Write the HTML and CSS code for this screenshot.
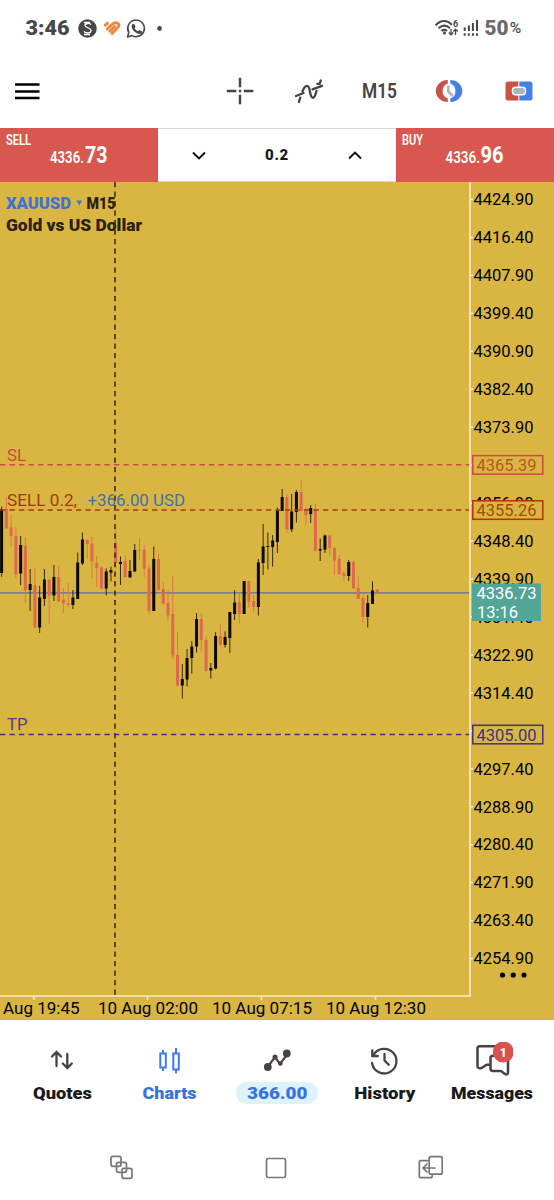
FILE: index.html
```html
<!DOCTYPE html>
<html lang="en">
<head>
    <meta charset="UTF-8">
    <meta name="viewport" content="width=device-width, initial-scale=1.0">
    <title>XAUUSD Chart</title>
    <link rel="stylesheet" href="styles.css">
</head>
<body>
    <div class="status-bar">
        <svg class="status-icons" width="170" height="56" viewBox="0 0 170 56">
            <text class="clock" x="25.500" y="35" textLength="44" lengthAdjust="spacingAndGlyphs">3:46</text>
            <circle cx="87.5" cy="28.500" r="9.300" fill="#484848"/>
            <path d="M91 24.500c-1.500-1.500-6-1.500-6 1s6 2 6 5-5 3-7 1M84 22.500h6M84 34.500h6" fill="none" stroke="#fff" stroke-width="1.300"/>
            <g fill="none" stroke="#ea8840" stroke-width="2.900" stroke-linecap="round" stroke-linejoin="round">
                <path d="M105.200 25.200l2.300-1.900"/>
                <path d="M107.200 29l5.600-5.300q3.500-2.200 5.700.3 1 2-.8 3.500l-5.700 6"/>
                <path d="M109.800 31.300l4.700-4.700"/>
            </g>
            <path d="M127.500 37l1.300-4.600a8.300 8.300 0 1 1 3.200 3.200z" fill="none" stroke="#484848" stroke-width="1.600" stroke-linejoin="round"/>
            <path d="M132.300 24.300l1.800-.5 1.500 3-1 1.400q1.200 2.200 3.400 3l1.400-1.300 2.800 1.500c0 2.500-2.700 3-4.700 2.100-3.500-1.500-6-4.500-5.900-7.500z" fill="#484848"/>
            <circle cx="159.500" cy="28.500" r="2.400" fill="#484848"/>
        </svg>
        <svg class="status-icons" width="130" height="56" viewBox="424 0 130 56">
            <g fill="none" stroke="#484848" stroke-width="2">
                <path d="M435.500 25.200q8.500-8 16.500-.5M438.500 28.200q6-5.200 11.500 0M441.500 31q3-2.200 5.500 0"/>
                <path d="M451 29v5.500M448.800 32.500l2.200 2.300 2.200-2.300M455.500 35v-5.500M453.300 31.500l2.200-2.300 2.200 2.300" stroke-width="1.300"/>
            </g>
            <circle cx="444.500" cy="33" r="1.500" fill="#484848"/>
            <text x="453" y="26.500" class="wifi-gen">6</text>
            <path d="M464.700 27.500v3.500M468.900 25.500v5.500M472.900 23v8M477 20v11" stroke="#484848" stroke-width="2"/>
            <path d="M463.700 34.500h15" stroke="#484848" stroke-width="2.400" stroke-dasharray="2 2.100"/>
            <text class="battery" x="484.500" y="34.800" textLength="24" lengthAdjust="spacingAndGlyphs">50</text>
            <text class="percent" x="509.800" y="32.800" textLength="11.500" lengthAdjust="spacingAndGlyphs">%</text>
        </svg>
    </div>

    <div class="toolbar">
        <svg width="26" height="18" viewBox="0 0 26 18"><path d="M1 2.500h24.500M1 9.500h24.500M1 16h24.500" stroke="#000" stroke-width="2.500"/></svg>
        <div class="tools">
            <svg class="crosshair" width="28" height="28" viewBox="0 0 28 28"><path d="M14 .8v9.500M14 17.800v9.500M.8 14h9.500M17.800 14h9.500M12.800 14h2.400" stroke="#484342" stroke-width="2.400"/></svg>
            <svg class="indicators" width="30" height="28" viewBox="294 76 30 28">
                <g fill="none" stroke="#484342" stroke-width="2.300" stroke-linecap="round">
                    <path d="M296 95l7.500-3M312.500 88.300l9.500-3.500M317.300 82.800h2.300l1.200-3.300M299 101l1.300-4.500"/>
                    <path d="M302.500 90.500c1.500-4 3-6 5-5.500s2 4 2.600 6.500 1 5.300 2.900 5.300 2.500-3.300 3.500-6.800"/>
                </g>
            </svg>
            <svg width="38" height="28" viewBox="0 0 38 28"><text class="period" x="1" y="20.700" textLength="35" lengthAdjust="spacingAndGlyphs">M15</text></svg>
            <svg width="28" height="24" viewBox="0 0 28 24">
                <path d="M12.800 1A12 11 0 0 0 12.800 23v-3.500a8 8 0 0 1 0-15z" fill="#c95247"/>
                <path d="M15.300 1A12 11 0 0 1 15.300 23v-3.500a8 8 0 0 0 0-15z" fill="#4380e8"/>
                <path d="M13.300 6.500v6l4.500 4.500" fill="none" stroke="#a9b7bd" stroke-width="2.600"/>
            </svg>
            <svg class="one-click" width="28" height="20" viewBox="0 0 28 20">
                <path d="M13.300 .5H3Q.5 .5 .5 3v14q0 2.500 2.500 2.500h10.300z" fill="#c95247"/>
                <path d="M14.300 .5H25q2.500 0 2.500 2.500v14q0 2.500-2.500 2.500H14.300z" fill="#4380e8"/>
                <rect x="7.500" y="6.300" width="13" height="7.500" rx="3" fill="#a9b7bd" stroke="#fff" stroke-width="1.400"/>
            </svg>
        </div>
    </div>

    <div class="trade-panel">
        <svg class="side" width="158" height="54" viewBox="0 128 158 54">
            <text class="side-label" x="6" y="145" textLength="25" lengthAdjust="spacingAndGlyphs">SELL</text>
            <text class="side-price" x="50" y="162.500" textLength="34" lengthAdjust="spacingAndGlyphs">4336.</text>
            <text class="side-pips" x="85" y="162.500" textLength="22.500" lengthAdjust="spacingAndGlyphs">73</text>
        </svg>
        <div class="volume">
            <svg width="14" height="9" viewBox="0 0 14 9"><path d="M1 1.500l6 6 6-6" fill="none" stroke="#111" stroke-width="1.900"/></svg>
            <span>0.2</span>
            <svg width="14" height="9" viewBox="0 0 14 9"><path d="M1 7.500l6-6 6 6" fill="none" stroke="#111" stroke-width="1.900"/></svg>
        </div>
        <svg class="side" width="158" height="54" viewBox="396 128 158 54">
            <text class="side-label" x="402" y="145" textLength="21" lengthAdjust="spacingAndGlyphs">BUY</text>
            <text class="side-price" x="445.500" y="162.500" textLength="34.500" lengthAdjust="spacingAndGlyphs">4336.</text>
            <text class="side-pips" x="480.500" y="162.500" textLength="23" lengthAdjust="spacingAndGlyphs">96</text>
        </svg>
    </div>

    <svg class="chart" width="554" height="838" viewBox="0 182 554 838">
        <path d="M0 592.800H470" stroke="#80808c" stroke-width="1.800"/>
        <g id="candles"></g>
        <path class="dash" d="M115 182V995" stroke="#3b2500"/>
        <path class="dash" d="M0 464.700H470" stroke="#d04a4a"/>
        <path class="dash" d="M0 510H470" stroke="#a83a10"/>
        <path class="dash" d="M0 734.500H470" stroke="#40308c"/>
        <path d="M470 182V996M0 996H471" stroke="#f8edcb" stroke-width="1.600" fill="none"/>
        <g id="scale"></g>

        <text class="title symbol" x="6" y="208.800" textLength="65" lengthAdjust="spacingAndGlyphs">XAUUSD</text>
        <path d="M76.500 200.500h5.500l-2.750 5z" fill="#3b74d5"/>
        <text class="title" x="86.500" y="208.800" textLength="29" lengthAdjust="spacingAndGlyphs">M15</text>
        <text class="title" x="6" y="230.500" textLength="136" lengthAdjust="spacingAndGlyphs">Gold vs US Dollar</text>

        <text class="order" x="7" y="460.800" fill="#d0493c" textLength="19" lengthAdjust="spacingAndGlyphs">SL</text>
        <text class="order" x="7" y="506" fill="#a63708" textLength="70" lengthAdjust="spacingAndGlyphs">SELL 0.2,</text>
        <text class="order" x="87.500" y="506" fill="#3d72ad" textLength="97.500" lengthAdjust="spacingAndGlyphs">+366.00 USD</text>
        <text class="order" x="7" y="730.300" fill="#55398a" textLength="20.500" lengthAdjust="spacingAndGlyphs">TP</text>

        <g class="tag" stroke="#d5444c"><rect x="472.800" y="455.600" width="70" height="18.500"/><text x="476.500" y="471" fill="#bd5420" textLength="60" lengthAdjust="spacingAndGlyphs">4365.39</text></g>
        <g class="tag" stroke="#b8300c"><rect x="472.800" y="500.800" width="70" height="18.500"/><text x="476.500" y="516" fill="#a5490c" textLength="60" lengthAdjust="spacingAndGlyphs">4355.26</text></g>
        <g class="tag" stroke="#40308c"><rect x="472.800" y="725.300" width="70" height="18.500"/><text x="476.500" y="740.800" fill="#40308c" textLength="60" lengthAdjust="spacingAndGlyphs">4305.00</text></g>
        <rect x="472" y="583.500" width="69" height="37.500" fill="#53a596"/>
        <text class="price" x="476.500" y="599.300" fill="#fff" textLength="60" lengthAdjust="spacingAndGlyphs">4336.73</text>
        <text class="price" x="477" y="617.500" fill="#fff" textLength="41" lengthAdjust="spacingAndGlyphs">13:16</text>

        <circle cx="502.500" cy="975" r="2.600"/>
        <circle cx="513.200" cy="975" r="2.600"/>
        <circle cx="524" cy="975" r="2.600"/>

        <path d="M34 996v4M147.500 996v4M261.500 996v4M375.500 996v4" stroke="#f8edcb" stroke-width="1.500"/>
        <text class="price" x="3" y="1013.500" textLength="76.500" lengthAdjust="spacingAndGlyphs">Aug 19:45</text>
        <text class="price" x="98" y="1013.500" textLength="100" lengthAdjust="spacingAndGlyphs">10 Aug 02:00</text>
        <text class="price" x="212" y="1013.500" textLength="100" lengthAdjust="spacingAndGlyphs">10 Aug 07:15</text>
        <text class="price" x="326" y="1013.500" textLength="100" lengthAdjust="spacingAndGlyphs">10 Aug 12:30</text>
    </svg>

    <div class="tabs">
        <div class="tab">
            <svg width="44" height="36" viewBox="41 1042 44 36"><path d="M56.500 1066v-14M52 1056.500l4.500-4.500 4.500 4.500M67.300 1054v14M62.800 1063.500l4.500 4.500 4.500-4.500" fill="none" stroke="#484342" stroke-width="2.300" stroke-linecap="round"/></svg>
            <svg class="tab-label" width="62" height="22" viewBox="0 0 62 22"><text x="1" y="17" textLength="59" lengthAdjust="spacingAndGlyphs">Quotes</text></svg>
        </div>
        <div class="tab active">
            <svg width="44" height="36" viewBox="148 1042 44 36"><path d="M160.300 1053.500h5.500v14h-5.500zM163 1050v3.500M163 1067.500v3.500M173.300 1053.500h5.500v16h-5.500zM176 1048v5.500M176 1069.500v3.800" fill="none" stroke="#3d7bf0" stroke-width="2"/></svg>
            <svg class="tab-label" width="62" height="22" viewBox="0 0 62 22"><text x="3.500" y="17" textLength="54" lengthAdjust="spacingAndGlyphs">Charts</text></svg>
        </div>
        <div class="tab active">
            <svg width="44" height="36" viewBox="255 1042 44 36"><path d="M267.500 1067l7.500-10 5 7 7.500-10" fill="none" stroke="#484342" stroke-width="2.200"/><g fill="#484342"><circle cx="267.800" cy="1067" r="3.900"/><circle cx="275" cy="1057" r="2.500"/><circle cx="280.300" cy="1063.500" r="2.300"/><circle cx="286.800" cy="1053.500" r="3.900"/></g></svg>
            <svg class="tab-label pill" width="82" height="22" viewBox="0 0 82 22"><text x="11" y="17" textLength="60.500" lengthAdjust="spacingAndGlyphs">366.00</text></svg>
        </div>
        <div class="tab">
            <svg width="44" height="36" viewBox="362 1042 44 36"><g fill="none" stroke="#484342" stroke-width="2.300" stroke-linecap="round"><path d="M373.500 1055a12.300 12.300 0 1 1-1.500 8"/><path d="M372.300 1050.500v5.500h5.500"/><path d="M384.500 1054v6.500l4.300 4.300"/></g></svg>
            <svg class="tab-label" width="64" height="22" viewBox="0 0 64 22"><text x="2.300" y="17" textLength="61" lengthAdjust="spacingAndGlyphs">History</text></svg>
        </div>
        <div class="tab">
            <svg width="44" height="36" viewBox="469 1042 44 36">
                <g fill="#fff" stroke="#484342" stroke-width="2.500" stroke-linejoin="round">
                    <path d="M479.500 1046.200h17.500q2.500 0 2.500 2.500v16h-13l-5 3.300q-4 1-4-2v-17.300q0-2.500 2-2.500z"/>
                    <path d="M493 1055.800h12.500q2.500 0 2.500 2.500v13.700q0 3.500-3 2l-4-3h-8q-2.500 0-2.500-2.500v-10.200q0-2.500 2.500-2.500z"/>
                </g>
                <circle cx="503.300" cy="1052" r="10.500" fill="#da514d"/>
                <text class="badge" x="503.300" y="1056.500" text-anchor="middle">1</text>
            </svg>
            <svg class="tab-label" width="84" height="22" viewBox="0 0 84 22"><text x="2" y="17" textLength="82" lengthAdjust="spacingAndGlyphs">Messages</text></svg>
        </div>
    </div>

    <div class="nav-bar">
        <svg width="24" height="26" viewBox="0 0 24 26"><g fill="none" stroke="#777" stroke-width="1.700"><rect x="1" y="1.300" width="10" height="10" rx="2"/><rect x="6.500" y="7.300" width="10" height="10" rx="2"/><rect x="12" y="13.300" width="10" height="10" rx="2"/></g></svg>
        <svg width="24" height="26" viewBox="0 0 24 26"><rect x="2.500" y="3.500" width="19" height="19" rx="1.500" fill="none" stroke="#777" stroke-width="1.700"/></svg>
        <svg width="26" height="26" viewBox="0 0 26 26"><g fill="none" stroke="#777" stroke-width="1.700"><path d="M11 5.700H3q-1.700 0-1.700 1.700v13.500q0 1.700 1.700 1.700h9.500q1.700 0 1.700-1.700v-1.500"/><rect x="11.200" y="1.700" width="13" height="17.500" rx="1.700"/><path d="M17.500 13H5.500M9.500 8.500L5 13l4.500 4.500"/></g></svg>
    </div>

    <script>
        // [direction, high, low, body top, body bottom], b = bull, s = bear
        const candles = [
            ['b', 506.7, 576.7, 509, 573], ['s', 497, 528, 509, 528.5], ['s', 515, 547, 527.5, 536],
            ['s', 527, 578, 536, 574.5], ['b', 536, 585, 545, 573.5], ['s', 537, 603, 546, 590],
            ['b', 569, 611, 584, 590], ['s', 568, 628, 585, 627.5], ['b', 586, 633, 597.5, 627.5],
            ['b', 569, 606, 579.5, 599], ['s', 579, 624, 579.5, 595.5], ['b', 565, 601, 577, 595.5],
            ['s', 566, 602, 577, 601.5], ['s', 588, 613.5, 599.5, 603.5], ['s', 583, 607, 603.5, 605],
            ['b', 590, 609, 597.5, 605], ['b', 552.5, 599, 562.5, 599], ['b', 532.5, 565, 539.5, 563.5],
            ['s', 539.5, 559, 540, 544], ['s', 536.5, 578, 543.5, 561.5], ['s', 556, 587, 563, 568],
            ['s', 566, 589, 567.5, 588.5], ['b', 568.5, 595.5, 571.5, 588.5], ['b', 566.5, 581.5, 570, 572.5],
            ['s', 530, 565, 543, 563], ['b', 556.5, 585, 562, 564], ['s', 555, 577.5, 561, 577],
            ['b', 560, 577.5, 571, 577.5], ['b', 544, 571.5, 550, 571.5], ['s', 538, 560, 549.5, 550.5],
            ['s', 545, 577, 549.5, 568.5], ['s', 565, 614, 568.5, 611], ['b', 546.5, 611, 559, 611],
            ['s', 553.5, 591, 559, 589.5], ['s', 582, 605, 589, 603.5], ['s', 590, 621, 603, 615.5],
            ['s', 576, 659, 614, 655.5], ['s', 632, 686.5, 655, 685.5], ['b', 664, 698.5, 679, 685.5],
            ['b', 649, 686.5, 658, 679.5], ['b', 641, 673.5, 646.5, 658], ['b', 613, 652.5, 619, 646.5],
            ['s', 613, 652.5, 619, 640], ['s', 636.5, 672.5, 640, 671], ['b', 663, 678.5, 668, 670.5],
            ['b', 632, 669.5, 636, 668.5], ['s', 624, 646.5, 636, 645], ['b', 631.5, 647.5, 637, 645],
            ['b', 612, 653, 612, 638], ['b', 590, 620, 602.5, 614], ['s', 594, 623.5, 602.5, 614],
            ['b', 581, 614, 581, 614], ['s', 581, 608, 581, 602], ['s', 595, 612.5, 601, 607],
            ['b', 559, 615.5, 562.5, 607], ['b', 524, 575, 546.5, 563], ['b', 532.5, 569.5, 546, 547],
            ['b', 535, 566.5, 540.5, 547], ['b', 507.5, 553, 510, 542], ['b', 489, 511, 497, 511],
            ['s', 494, 533, 497, 529.5], ['b', 494, 532, 511.5, 529.5], ['b', 490, 522.5, 492, 512],
            ['s', 480, 511.5, 492, 511], ['s', 507, 525.5, 509.5, 515], ['b', 505, 523, 508, 514],
            ['s', 504, 551.5, 509.5, 550.5], ['b', 538.5, 561, 549, 550.5], ['b', 534.5, 553, 535.5, 549.5],
            ['s', 535, 556.5, 535.5, 548], ['s', 547, 575, 548, 560.5], ['s', 555, 575, 559, 574],
            ['s', 571.5, 581.5, 573, 576], ['b', 560, 581, 562, 576], ['s', 560.5, 588.5, 562, 588.5],
            ['s', 576, 599, 588, 599], ['s', 595.5, 622.5, 598, 617], ['b', 595, 627.5, 603, 617],
            ['b', 581.5, 604, 590.5, 604], ['s', 589, 594, 589.5, 592.5]
        ];

        let bars = '';
        candles.forEach(([dir, high, low, top, bottom], i) => {
            const x = 1.6 + i * 4.755;
            bars += `<g class="${dir === 'b' ? 'bull' : 'bear'}">
                <rect class="wick" x="${x - 0.5}" y="${high}" width="1" height="${low - high}"/>
                <rect x="${x - 1.5}" y="${top}" width="3" height="${bottom - top}"/></g>`;
        });
        document.getElementById('candles').innerHTML = bars;

        let labels = '';
        for (let i = 0; i <= 20; i++) {
            const y = 199.5 + i * 37.95;
            labels += `<path d="M470 ${y}h3" stroke="#f8edcb" stroke-width="1.5"/>`;
            // 4305.90 sits behind the take profit tag
            if (i !== 14) {
                labels += `<text class="price" x="473.500" y="${y + 5.8}" textLength="60" lengthAdjust="spacingAndGlyphs">${(4424.9 - i * 8.5).toFixed(2)}</text>`;
            }
        }
        document.getElementById('scale').innerHTML = labels;
    </script>
</body>
</html>
```

FILE: styles.css
```css
* {
    box-sizing: border-box;
}
body {
    margin: 0;
    width: 554px;
    height: 1200px;
    overflow: hidden;
    background: #fefefe;
    font-family: Roboto, "Liberation Sans", sans-serif;
    color: #1a1a1a;
}
svg {
    display: block;
    flex-shrink: 0;
}
.status-bar {
    display: flex;
    justify-content: space-between;
    height: 56px;
}
.status-icons text {
    fill: #484848;
}
.status-icons .clock {
    font-size: 20px;
    font-weight: 900;
}
.status-icons .battery {
    font-size: 20px;
    font-weight: 900;
    fill: #6b6b6b;
}
.status-icons .percent {
    font-size: 14px;
    font-weight: 500;
}
.status-icons .wifi-gen {
    font-size: 9px;
    font-weight: 700;
}
.toolbar {
    display: flex;
    align-items: center;
    justify-content: space-between;
    height: 71px;
    padding: 0 21px 2px 14px;
}
.tools {
    display: flex;
    align-items: center;
    gap: 36px;
}
.crosshair {
    margin-right: 4px;
}
.indicators {
    margin-right: 1px;
}
.one-click {
    margin-left: 6px;
}
.period {
    font-size: 19.5px;
    font-weight: 600;
    fill: #484342;
}
.trade-panel {
    display: flex;
    height: 55px;
    padding-top: 1px;
}
.side {
    background: #d85850;
}
.side text {
    fill: #fff;
}
.side-label {
    font-size: 14px;
    font-weight: 600;
}
.side-price {
    font-size: 17px;
    font-weight: 600;
}
.side-pips {
    font-size: 24px;
    font-weight: 700;
}
.volume {
    flex: 1;
    display: flex;
    align-items: center;
    justify-content: space-between;
    padding: 0 34px;
    border-top: 1px solid #d8d8d8;
    border-bottom: 1px solid #d8d8d8;
    font-size: 15px;
    font-weight: 900;
    letter-spacing: 0.7px;
}
.chart {
    background: #d9b642;
}
.dash {
    fill: none;
    stroke-width: 1.5;
    stroke-dasharray: 5.3 4.2;
}
.bull {
    fill: #0c0900;
}
.bear {
    fill: #df694d;
}
.wick {
    opacity: 0.8;
}
.title {
    font-size: 17px;
    font-weight: 900;
    fill: #2b210d;
}
.chart .symbol {
    fill: #3b74d5;
}
.order {
    font-size: 17px;
}
.price, .tag text {
    font-size: 17px;
}
.tag rect {
    fill: #d9b642;
    stroke-width: 1.5;
}
.tag text {
    stroke: none;
}
.tabs {
    display: flex;
    justify-content: space-between;
    height: 100px;
    padding: 22px 18px 0 18px;
}
.tab {
    display: flex;
    flex-direction: column;
    align-items: center;
    width: 90px;
    gap: 4px;
}
.tab-label {
    font-size: 17px;
    font-weight: 900;
    fill: #1a1a1a;
}
.active .tab-label {
    fill: #3773e0;
}
.pill {
    background: #def2fb;
    border-radius: 11px;
}
.badge {
    font-size: 12px;
    font-weight: 900;
    fill: #fff;
}
.nav-bar {
    display: flex;
    justify-content: space-between;
    padding: 35px 110px 0 110px;
}
```
